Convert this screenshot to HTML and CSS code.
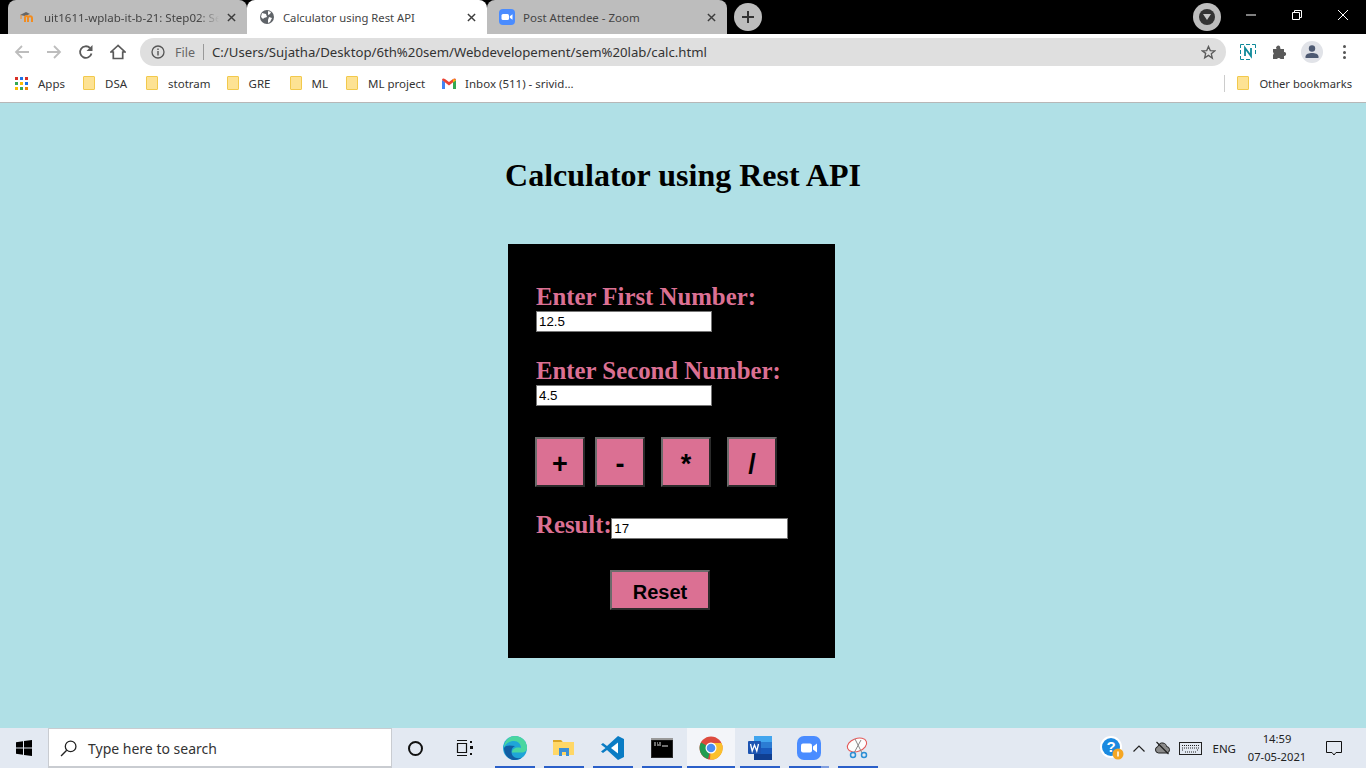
FILE: index.html
```html
<!DOCTYPE html>
<html lang="en">
<head>
<meta charset="utf-8">
<title>Calculator using Rest API</title>
<link rel="stylesheet" href="styles.css">
</head>
<body>
<div class="tabstrip">
  <div class="tab tab-gray tab-first">
    <svg class="fav" viewBox="0 0 16 16"><path d="M0 6 6 3l4 2-5 2z" fill="#666"/><path d="M1 6v4" stroke="#e88a2e" stroke-width="1"/><path d="M5 13V8.500c0-2 3-2 3 0V13M8 9c0-2 4-2.500 4 0v4" fill="none" stroke="#f28c1f" stroke-width="2"/></svg>
    <span class="tab-title fade">uit1611-wplab-it-b-21: Step02: Se</span>
    <svg class="tab-x" viewBox="0 0 10 10"><path d="M1 1l8 8M9 1 1 9" stroke="#3c3c3c" stroke-width="1.600"/></svg>
  </div>
  <div class="tab tab-active">
    <svg class="fav" viewBox="0 0 16 16"><circle cx="8" cy="8" r="7" fill="#5f6368"/><path d="M3 4l4 1 1 3-3 1-1 1-2-2zM9 2l3 1-1 2-2 1zM10 8l3 1-2 4-2 1 0-3z" fill="#fff"/></svg>
    <span class="tab-title title-mid">Calculator using Rest API</span>
    <svg class="tab-x" viewBox="0 0 10 10"><path d="M1 1l8 8M9 1 1 9" stroke="#3c3c3c" stroke-width="1.600"/></svg>
  </div>
  <div class="tab tab-gray">
    <svg class="fav" viewBox="0 0 16 16"><rect width="16" height="16" rx="4" fill="#4a8cff"/><rect x="2.500" y="5" width="7.500" height="6" rx="1.500" fill="#fff"/><path d="M10.800 7.300 13.500 5.200v5.600l-2.700-2.100z" fill="#fff"/></svg>
    <span class="tab-title">Post Attendee - Zoom</span>
    <svg class="tab-x" viewBox="0 0 10 10"><path d="M1 1l8 8M9 1 1 9" stroke="#3c3c3c" stroke-width="1.600"/></svg>
  </div>
  <div class="newtab"><svg viewBox="0 0 14 14" width="14" height="14"><path d="M7 1v12M1 7h12" stroke="#333" stroke-width="2"/></svg></div>
  <div class="strip-space"></div>
  <div class="media"><span class="media-dot"><svg viewBox="0 0 8 6" width="8" height="6"><path d="M0 0h8L4 6z" fill="#c8c8c8"/></svg></span></div>
  <div class="winctl">
    <svg viewBox="0 0 10 10" width="10" height="10"><path d="M0 5h10" stroke="#fff"/></svg>
    <svg viewBox="0 0 10 10" width="10" height="10"><path d="M.5 2.500h7v7h-7zM2.500 2.500v-2h7v7h-2" fill="none" stroke="#fff"/></svg>
    <svg viewBox="0 0 10 10" width="10" height="10"><path d="M0 0l10 10M10 0 0 10" stroke="#fff"/></svg>
  </div>
</div>

<div class="toolbar">
  <svg class="nav nav-back" viewBox="0 0 16 16"><path d="M15 8H2M8 2 2 8l6 6" fill="none" stroke="#bdbdbd" stroke-width="1.800"/></svg>
  <svg class="nav nav-fwd" viewBox="0 0 16 16"><path d="M1 8h13M8 2l6 6-6 6" fill="none" stroke="#bdbdbd" stroke-width="1.800"/></svg>
  <svg class="nav nav-reload" viewBox="0 0 16 16"><path d="M13.500 9.500A5.800 5.800 0 1 1 12 4" fill="none" stroke="#5a5a5a" stroke-width="1.800"/><path d="M14.500 1v6h-6z" fill="#5a5a5a"/></svg>
  <svg class="nav nav-home" viewBox="0 0 16 16"><path d="M8 1.500 1 8h2.300v6.500h9.400V8H15z" fill="none" stroke="#5a5a5a" stroke-width="1.700"/></svg>
  <div class="omnibox">
    <svg class="info" viewBox="0 0 14 14"><circle cx="7" cy="7" r="6" fill="none" stroke="#555" stroke-width="1.300"/><path d="M7 6v4.500M7 3.500v1.400" stroke="#555" stroke-width="1.400"/></svg>
    <span class="scheme">File</span>
    <span class="omni-sep"></span>
    <span class="url">C:/Users/Sujatha/Desktop/6th%20sem/Webdevelopement/sem%20lab/calc.html</span>
    <svg class="star" viewBox="0 0 16 16"><path d="M8 1.500l1.900 4.400 4.700.4-3.600 3.100 1.100 4.700L8 11.100l-4.100 2.500L5 8.900 1.400 6.300l4.700-.4z" fill="none" stroke="#5a5a5a" stroke-width="1.400"/></svg>
  </div>
  <svg class="ext-n" viewBox="0 0 16 16"><path d="M.5 4V.5H4M6 .5h4M12 .5h3.500V4M15.500 6v4M.5 6v4M.5 12v3.500H4M6 15.500h4" fill="none" stroke="#0f8a9a"/><path d="M5 12V4l6 8V4" fill="none" stroke="#0f8a9a" stroke-width="1.800"/></svg>
  <svg class="ext-p" viewBox="0 0 16 16"><path d="M1 5h3.500a2 2 0 0 1 3.500-2.500L8.500 5H12v3a2 2 0 0 1 1 3.800 2 2 0 0 1-1 .2v3H8.500a2 2 0 0 0-3.500 0H1v-4a2 2 0 0 0 0-3z" fill="#5a5a5a"/></svg>
  <span class="avatar"><svg viewBox="0 0 16 16" width="16" height="16"><circle cx="8" cy="4.500" r="3.200" fill="#4e5a72"/><path d="M1.500 14v-1.500c0-2.500 3.500-3.500 6.500-3.500s6.500 1 6.500 3.500V14z" fill="#4e5a72"/></svg></span>
  <span class="dots"><i></i><i></i><i></i></span>
</div>

<div class="bookmarks">
  <div class="bm bm-apps">
    <svg class="apps" viewBox="0 0 13 13"><g><rect width="3" height="3" fill="#d93025"/><rect x="5" width="3" height="3" fill="#1a73e8"/><rect x="10" width="3" height="3" fill="#d93025"/><rect y="5" width="3" height="3" fill="#34a853"/><rect x="5" y="5" width="3" height="3" fill="#fbbc04"/><rect x="10" y="5" width="3" height="3" fill="#1a73e8"/><rect y="10" width="3" height="3" fill="#fbbc04"/><rect x="5" y="10" width="3" height="3" fill="#34a853"/><rect x="10" y="10" width="3" height="3" fill="#ea8600"/></g></svg>
    <span>Apps</span>
  </div>
  <div class="bm bm-dsa"><span class="folder"></span><span>DSA</span></div>
  <div class="bm bm-stotram"><span class="folder"></span><span>stotram</span></div>
  <div class="bm bm-gre"><span class="folder"></span><span>GRE</span></div>
  <div class="bm bm-ml"><span class="folder"></span><span>ML</span></div>
  <div class="bm bm-mlp"><span class="folder"></span><span>ML project</span></div>
  <div class="bm bm-inbox">
    <svg class="gmail" viewBox="0 0 14 11"><path d="M0 2v9h3V4z" fill="#4285f4"/><path d="M14 2v9h-3V4z" fill="#34a853"/><path d="M0 2c0-1.500 1.500-2 3-1l4 3 4-3c1.500-1 3-.5 3 1L7 7.500z" fill="#ea4335"/><path d="M11 1l3 1-3 2.500z" fill="#fbbc04"/></svg>
    <span>Inbox (511) - srivid...</span>
  </div>
  <div class="bm-space"></div>
  <span class="bm-sep"></span>
  <div class="bm bm-other"><span class="folder"></span><span>Other bookmarks</span></div>
</div>

<main class="page">
  <h1 class="title">Calculator using Rest API</h1>
  <section class="card">
    <label class="field-label" for="a">Enter First Number:</label>
    <input class="num" id="a" type="text" value="12.5">
    <label class="field-label second" for="b">Enter Second Number:</label>
    <input class="num" id="b" type="text" value="4.5">
    <div class="ops">
      <button class="op" type="button">+</button>
      <button class="op op-wide" type="button">-</button>
      <button class="op op-wide" type="button">*</button>
      <button class="op op-wide" type="button">/</button>
    </div>
    <div class="result-row">
      <label class="field-label result-label" for="r">Result:</label>
      <input class="num" id="r" type="text" value="17">
    </div>
    <button class="reset" type="button">Reset</button>
  </section>
</main>

<footer class="taskbar">
  <div class="start"><svg viewBox="0 0 16 16" width="16" height="16"><path d="M0 2.300 7 1.200V7.500H0zM8 1 16 0V7.500H8zM0 8.500H7V14.800L0 13.700zM8 8.500H16V16L8 15z" fill="#000"/></svg></div>
  <div class="search">
    <svg class="search-ic" viewBox="0 0 16 16"><circle cx="10" cy="6" r="5" fill="none" stroke="#222" stroke-width="1.200"/><path d="M6.300 9.700 1 15" stroke="#222" stroke-width="1.300"/></svg>
    <span>Type here to search</span>
  </div>
  <div class="slot"><span class="cortana"></span></div>
  <div class="slot"><svg class="taskview" viewBox="0 0 17 16" width="17" height="16"><path d="M1 .5h10M1 15.500h10M1.500 3.500h9v9h-9z" fill="none" stroke="#111" stroke-width="1.200"/><rect x="14" y="1" width="2" height="2" fill="#111"/><rect x="14" y="6" width="3" height="3" fill="#111"/><rect x="14" y="13" width="2" height="2" fill="#111"/></svg></div>
  <div class="slot open"><svg viewBox="0 0 24 24" width="24" height="24"><circle cx="12" cy="12" r="12" fill="#1fa5d8"/><path d="M12 0a12 12 0 0 1 12 12c0 3-3 5-6 4.500H9c0-3 3-5 6-5 2 0 3 .5 3 .5 0-4-3-7-7-7C6 5 2 8 1 12 1 5 6 0 12 0z" fill="#49d6a0"/><path d="M1 12c0 6 4 12 11 12 3 0 5-1 7-2.500-6 2-10-1-10.500-5-.3-3 1-5.500 3.500-6.500C7 9 2 9 1 12z" fill="#115ea3"/></svg></div>
  <div class="slot open"><svg viewBox="0 0 22 20" width="22" height="20"><path d="M0 2h8l2 2h11v13H0z" fill="#ffd766"/><path d="M0 2h8l1.500 2H0z" fill="#dba526"/><path d="M6 10h10v8h-3v-4H9v4H6z" fill="#3b8fd6"/></svg></div>
  <div class="slot open"><svg viewBox="0 0 24 24" width="24" height="24"><path d="M17 0l6 3v18l-6 3L6 14l-4 3-2-1.500L4.500 12 0 8.500 2 7l4 3z" fill="#0a7cc4"/><path d="M17 6.500 10 12l7 5.500z" fill="#fff"/></svg></div>
  <div class="slot open"><svg viewBox="0 0 22 20" width="22" height="20"><rect width="22" height="20" fill="#2a2a2a"/><rect y="0" width="22" height="2" fill="#9a9a9a"/><rect x="1" y="2.500" width="20" height="16.500" fill="#000"/><path d="M3 5h2M6 5h1M8 5h2M3 7h2M6 7h4M11 8h6" stroke="#ddd" stroke-width="1"/></svg></div>
  <div class="slot open active"><svg viewBox="0 0 24 24" width="24" height="24"><circle cx="12" cy="12" r="11.500" fill="#dd4b3e"/><path d="M12 12 2 6.500v0A11.500 11.500 0 0 0 9 23z" fill="#219c52"/><path d="M12 7h10.500A11.500 11.500 0 0 1 11 23.500z" fill="#fbc02d"/><circle cx="12" cy="12" r="5.500" fill="#fff"/><circle cx="12" cy="12" r="4.300" fill="#4a8df3"/></svg></div>
  <div class="slot open"><svg viewBox="0 0 24 24" width="24" height="24"><rect x="6" y="0" width="18" height="24" rx="1" fill="#2b7cd3"/><rect x="6" y="0" width="18" height="6" fill="#41a5ee"/><rect x="6" y="12" width="18" height="6" fill="#185abd"/><rect x="6" y="18" width="18" height="6" fill="#103f91"/><rect x="0" y="5" width="13" height="13" rx="1" fill="#1c54b2"/><path d="M2.500 8l1.700 7 2.300-6 2.300 6L10.500 8" fill="none" stroke="#fff" stroke-width="1.300"/></svg></div>
  <div class="slot open split"><svg viewBox="0 0 24 24" width="24" height="24"><rect width="24" height="24" rx="7" fill="#4a8cff"/><rect x="4" y="7.500" width="11" height="9" rx="2" fill="#fff"/><path d="M16 10.500 20 7.500v9l-4-3z" fill="#fff"/></svg></div>
  <div class="slot open"><svg viewBox="0 0 24 24" width="24" height="24"><ellipse cx="11" cy="9" rx="10" ry="6.500" transform="rotate(-20 11 9)" fill="#fdfdfd" stroke="#e45a5a" stroke-width="1.100"/><path d="M9 3l7 14M15 4l-7 13" stroke="#888" stroke-width="1"/><circle cx="7" cy="19" r="2.500" fill="none" stroke="#2b8fd6" stroke-width="1.500"/><circle cx="18" cy="19" r="2.500" fill="none" stroke="#2b8fd6" stroke-width="1.500"/></svg></div>
  <div class="task-space"></div>
  <div class="tray">
    <span class="help"><svg viewBox="0 0 24 24" width="24" height="24"><circle cx="11" cy="11" r="11" fill="#fff"/><circle cx="11" cy="11" r="9" fill="#1b8ae0"/><text x="11" y="16" text-anchor="middle" class="help-q">?</text><circle cx="18" cy="18" r="5.500" fill="#f5a623"/><path d="M18 15.500v5" stroke="#fff" stroke-width="1.500"/></svg></span>
    <svg class="chev" viewBox="0 0 12 7"><path d="M.5 6.500 6 1l5.500 5.500" fill="none" stroke="#222" stroke-width="1.200"/></svg>
    <svg class="cloud" viewBox="0 0 16 14"><path d="M4 12a3.300 3.300 0 0 1-.5-6.500C4 3 6 1.500 8.500 2 11 2.500 12 4 12 5.500a3.300 3.300 0 0 1 .5 6.500z" fill="#8a8a8a" stroke="#222"/><path d="M2 1l12 12" stroke="#222" stroke-width="1.300"/></svg>
    <svg class="kbd" viewBox="0 0 23 13"><rect x=".5" y=".5" width="22" height="12" fill="none" stroke="#222"/><path d="M3 3.500h17M3 6h17M3 8h1M6 10h11M18 8h2" stroke="#222" stroke-dasharray="1 1"/></svg>
    <span class="lang">ENG</span>
    <span class="clock"><span>14:59</span><span>07-05-2021</span></span>
    <svg class="notify" viewBox="0 0 16 15"><path d="M.5.500h15v11H10L8 14l-2-2.500H.5z" fill="none" stroke="#111" stroke-width="1"/></svg>
  </div>
</footer>
</body>
</html>
```

FILE: styles.css
```css
* { box-sizing: border-box; }
html, body { margin: 0; padding: 0; }
body {
  width: 1366px;
  height: 768px;
  overflow: hidden;
  display: flex;
  flex-direction: column;
  font-family: "Noto Sans", "Liberation Sans", sans-serif;
  font-size: 12px;
  color: #333;
  background: #b0e0e6;
}

/* Tab strip */
.tabstrip {
  height: 34px;
  background: #000;
  display: flex;
  align-items: stretch;
  padding-left: 8px;
  flex: none;
}
.tab {
  width: 240px;
  display: flex;
  align-items: center;
  padding: 0 11px 0 12px;
  border-radius: 8px 8px 0 0;
}
.tab-first { width: 239px; }
.tab-gray { background: #bdbdbd; color: #444; }
.tab-active { background: #fff; color: #444; }
.fav { width: 16px; height: 16px; flex: none; margin-right: 8px; }
.tab-gray:last-of-type .fav { margin-right: 7px; }
.tab-title { flex: 1; white-space: nowrap; overflow: hidden; font-size: 11.500px; }
.title-mid { font-size: 11.250px; }
.fade { -webkit-mask-image: linear-gradient(90deg, #000 88%, transparent); mask-image: linear-gradient(90deg, #000 88%, transparent); }
.tab-x { width: 9px; height: 9px; flex: none; margin-left: 8px; }
.newtab {
  width: 28px; height: 28px;
  margin: 3px 0 0 7px;
  border-radius: 50%;
  background: #bdbdbd;
  display: flex; align-items: center; justify-content: center;
}
.strip-space { flex: 1; }
.media {
  width: 28px; height: 28px; margin: 3px 25px 0 0;
  border-radius: 50%;
  background: #bdbdbd;
  display: flex; align-items: center; justify-content: center;
}
.media-dot {
  width: 16px; height: 16px; border-radius: 50%;
  background: #333;
  display: flex; align-items: center; justify-content: center;
}
.winctl {
  width: 120px;
  display: flex;
  align-items: center;
  justify-content: space-between;
  padding: 0 18px 4px 0;
}

/* Toolbar */
.toolbar {
  height: 34px;
  background: #fff;
  display: flex;
  align-items: center;
  padding: 2px 0 0 14px;
  flex: none;
}
.nav { width: 16px; height: 16px; flex: none; }
.nav-fwd { margin-left: 16px; }
.nav-reload { margin-left: 16px; }
.nav-home { margin-left: 16px; }
.omnibox {
  width: 1086px;
  height: 28px;
  margin-left: 14px;
  border-radius: 14px;
  background: #dfdfdf;
  display: flex;
  align-items: center;
  padding: 0 10px 0 11px;
}
.info { width: 14px; height: 14px; flex: none; }
.scheme { margin-left: 10px; font-size: 12.500px; color: #666; }
.omni-sep { width: 1px; height: 16px; background: #999; margin: 0 8px; }
.url { flex: 1; font-size: 13.200px; color: #333; white-space: nowrap; }
.star { width: 15px; height: 15px; flex: none; }
.ext-n { width: 16px; height: 16px; margin-left: 14px; flex: none; }
.ext-p { width: 16px; height: 16px; margin-left: 16px; flex: none; }
.avatar {
  width: 22px; height: 22px; margin-left: 13px;
  border-radius: 50%; background: #e1e3e8;
  display: flex; align-items: center; justify-content: center;
  flex: none;
}
.dots { display: flex; flex-direction: column; gap: 2.500px; margin-left: 20px; flex: none; }
.dots i { display: block; width: 3px; height: 3px; border-radius: 50%; background: #555; }

/* Bookmarks */
.bookmarks {
  height: 35px;
  background: #fff;
  border-bottom: 1px solid #b7b7b7;
  display: flex;
  align-items: center;
  padding: 0 0 4px 15px;
  flex: none;
  font-size: 11.500px;
  color: #333;
}
.bm { display: flex; align-items: center; white-space: nowrap; }
.apps { width: 13px; height: 13px; margin-right: 10px; }
.folder {
  width: 12px; height: 14px;
  background: #fde293;
  border: 1px solid #f2c94c;
  border-radius: 1px;
  margin-right: 10px;
  flex: none;
}
.bm-dsa { margin-left: 18px; }
.bm-stotram { margin-left: 19px; }
.bm-gre { margin-left: 16px; }
.bm-ml { margin-left: 19px; }
.bm-mlp { margin-left: 18px; }
.bm-inbox { margin-left: 17px; }
.gmail { width: 14px; height: 11px; margin-right: 9px; }
.bm-space { flex: 1; }
.bm-sep { width: 1px; height: 17px; background: #ccc; margin-right: 12px; }
.bm-other { margin-right: 14px; font-size: 11.200px; }

/* Page */
.page {
  flex: 1;
  background: #b0e0e6;
  padding-top: 54px;
  min-height: 0;
}
.title {
  margin: 0;
  text-align: center;
  font: bold 32px "Liberation Serif", "Times New Roman", serif;
  color: #000;
}
.card {
  width: 327px;
  height: 414px;
  margin: 50px 0 0 508px;
  padding: 40px 0 0 27px;
  background: #000;
  font-family: "Liberation Serif", serif;
}
.field-label {
  display: block;
  height: 27px;
  margin-left: 1px;
  font: bold 24.800px/25px "Liberation Serif", "Times New Roman", serif;
  color: #db7093;
}
.second { margin-top: 26px; }
.num {
  display: block;
  width: 176px;
  height: 21px;
  margin: 0 0 0 1px;
  padding: 0 2px;
  border: 1px solid #767676;
  background: #fff;
  color: #000;
  font: 13.333px "Liberation Sans", Arial, sans-serif;
  outline: none;
}
.ops { display: flex; margin-top: 31px; }
.op {
  width: 50px;
  height: 50px;
  margin-right: 10px;
  padding: 4px 0 0;
  background: #db7093;
  border: 2px solid;
  border-color: #6b6b6b #2b2b2b #2b2b2b #6b6b6b;
  color: #000;
  font: bold 27px "Liberation Sans", Arial, sans-serif;
}
.op-wide { margin-right: 16px; }
.result-row { display: flex; align-items: flex-start; margin-top: 31px; }
.result-label { margin-top: -6px; margin-right: -0.500px; }
.result-row .num { width: 177px; margin-left: 0; }
.reset {
  display: block;
  width: 100px;
  height: 40px;
  margin: 31px 0 0 75px;
  padding: 4px 0 0;
  background: #db7093;
  border: 2px solid;
  border-color: #6b6b6b #2b2b2b #2b2b2b #6b6b6b;
  color: #000;
  font: bold 20px "Liberation Sans", Arial, sans-serif;
}

/* Taskbar */
.taskbar {
  height: 40px;
  flex: none;
  background: #e3e9f2;
  display: flex;
  align-items: stretch;
  color: #111;
}
.start { width: 48px; display: flex; align-items: center; justify-content: center; }
.search {
  width: 344px;
  background: #fff;
  border: 1px solid #c9ccd1;
  border-bottom-width: 2px;
  display: flex;
  align-items: center;
  padding: 1px 0 0 11px;
  font-size: 14px;
  color: #333;
}
.search-ic { width: 17px; height: 17px; margin-right: 11px; }
.slot {
  width: 49px;
  display: flex;
  align-items: center;
  justify-content: center;
  position: relative;
}
.slot.open::after {
  content: "";
  position: absolute;
  left: 5px; right: 4px; bottom: 0;
  height: 2px;
  background: #2a5fc9;
}
.slot.active { background: linear-gradient(90deg, transparent 1px, #f3f5f9 1px); }
.slot.active::after { left: 1px; right: 0; }
.slot.split::before {
  content: "";
  position: absolute;
  right: 4px; bottom: 0;
  width: 8px; height: 2px;
  background: #7f9ee0;
  z-index: 1;
}
.cortana { width: 15px; height: 15px; margin-right: 2px; border: 2px solid #111; border-radius: 50%; }
.taskview { margin-right: 3px; }
.task-space { flex: 1; }
.tray { display: flex; align-items: center; padding-right: 24px; }
.help { display: flex; width: 24px; height: 24px; }
.help-q { font: bold 15px "Liberation Sans", sans-serif; fill: #fff; }
.chev { width: 12px; height: 7px; margin-left: 9px; }
.cloud { width: 17px; height: 14px; margin-left: 9px; }
.kbd { width: 23px; height: 13px; margin-left: 8px; }
.lang { font-size: 11.500px; margin-left: 10px; color: #222; }
.clock {
  display: flex; flex-direction: column; align-items: center;
  width: 60px; margin-left: 11px;
  font-size: 11.200px; line-height: 18px; color: #222;
  white-space: nowrap;
}
.notify { width: 16px; height: 15px; margin-left: 19px; }
```
